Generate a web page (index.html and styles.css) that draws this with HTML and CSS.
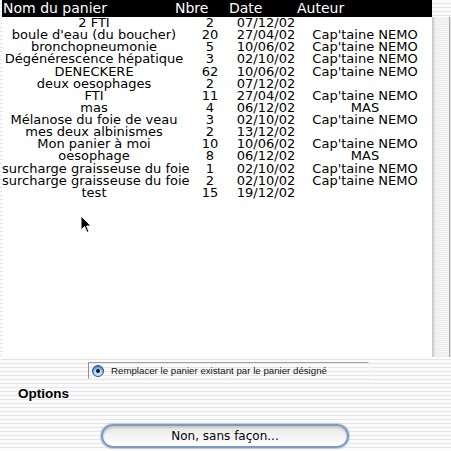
FILE: index.html
```html
<!DOCTYPE html>
<html lang="fr">
<head>
<meta charset="utf-8">
<link rel="stylesheet" href="styles.css">
</head>
<body>
<div class="window">
  <div class="listbox">
    <div class="list">
      <div class="header">
        <span class="h-nom">Nom du panier</span>
        <span class="h-nbre">Nbre</span>
        <span class="h-date">Date</span>
        <span class="h-auteur">Auteur</span>
      </div>
      <div class="rows">
        <div class="row"><span>2 FTI</span><span>2</span><span>07/12/02</span><span></span></div>
        <div class="row"><span>boule d'eau (du boucher)</span><span>20</span><span>27/04/02</span><span>Cap'taine NEMO</span></div>
        <div class="row"><span>bronchopneumonie</span><span>5</span><span>10/06/02</span><span>Cap'taine NEMO</span></div>
        <div class="row"><span>Dégénérescence hépatique</span><span>3</span><span>02/10/02</span><span>Cap'taine NEMO</span></div>
        <div class="row"><span>DENECKERE</span><span>62</span><span>10/06/02</span><span>Cap'taine NEMO</span></div>
        <div class="row"><span>deux oesophages</span><span>2</span><span>07/12/02</span><span></span></div>
        <div class="row"><span>FTI</span><span>11</span><span>27/04/02</span><span>Cap'taine NEMO</span></div>
        <div class="row"><span>mas</span><span>4</span><span>06/12/02</span><span>MAS</span></div>
        <div class="row"><span>Mélanose du foie de veau</span><span>3</span><span>02/10/02</span><span>Cap'taine NEMO</span></div>
        <div class="row"><span>mes deux albinismes</span><span>2</span><span>13/12/02</span><span></span></div>
        <div class="row"><span>Mon panier à moi</span><span>10</span><span>10/06/02</span><span>Cap'taine NEMO</span></div>
        <div class="row"><span>oesophage</span><span>8</span><span>06/12/02</span><span>MAS</span></div>
        <div class="row"><span>surcharge graisseuse du foie</span><span>1</span><span>02/10/02</span><span>Cap'taine NEMO</span></div>
        <div class="row"><span>surcharge graisseuse du foie</span><span>2</span><span>02/10/02</span><span>Cap'taine NEMO</span></div>
        <div class="row"><span>test</span><span>15</span><span>19/12/02</span><span></span></div>
      </div>
    </div>
    <div class="scrollbar"><div class="track"></div></div>
  </div>
  <div class="radio-line">
    <div class="radio-box">
      <span class="radio"><span class="dot"></span></span>
      <span class="radio-label">Remplacer le panier existant par le panier désigné</span>
    </div>
  </div>
  <div class="options">Options</div>
  <div class="button-line">
    <button class="btn">Non, sans façon...</button>
  </div>
  <svg class="cursor" width="12" height="19" viewBox="0 0 12 19">
    <path d="M1 1 L1 15 L4.5 11.5 L7 17.5 L9 16.6 L6.6 11 L11 11 Z" fill="#000" stroke="#fff" stroke-width="1"/>
  </svg>
</div>
</body>
</html>
```
FILE: styles.css
```css
html, body {
  margin: 0;
  padding: 0;
}
body {
  width: 451px;
  height: 451px;
  overflow: hidden;
  font-family: "DejaVu Sans", "Liberation Sans", sans-serif;
  background: repeating-linear-gradient(to bottom, #fbfbfb 0 3px, #e6e6e6 3px 4px);
}
.window {
  position: relative;
  width: 451px;
  height: 451px;
}
.listbox {
  display: flex;
  height: 357px;
  padding-left: 2px;
}
.list {
  width: 430px;
  background: #fff;
}
.header {
  height: 17px;
  background: #000;
  color: #fff;
  font-size: 14px;
  line-height: 17px;
  display: grid;
  grid-template-columns: 172px 54px 68px 1fr;
  padding-left: 1px;
  white-space: nowrap;
}
.rows {
  padding-top: 0;
}
.row {
  display: grid;
  grid-template-columns: 184px 48px 64px 134px;
  height: 12.14px;
  line-height: 12.14px;
  font-size: 13px;
  color: #000;
  white-space: nowrap;
}
.row span {
  text-align: center;
}
.scrollbar {
  width: 19px;
  display: flex;
  flex-direction: column;
  padding-top: 17px;
}
.track {
  flex: 1;
  background:
    linear-gradient(to right, #c9c9c9 0 1px, #dcdcdc 1px 3px, rgba(255,255,255,0) 3px 17px, #a8a8a8 17px 18px, #e0e0e0 18px 19px),
    repeating-linear-gradient(to bottom, #f6f6f6 0 1px, #ececec 1px 2px);
}
.radio-line {
  padding: 5px 0 0 88px;
}
.radio-box {
  display: flex;
  align-items: center;
  width: 276px;
  height: 15px;
  border-top: 1px solid #a0a0a0;
  border-left: 1px solid #909090;
  border-right: 1px solid #f4f4f4;
  border-bottom: 1px solid #f4f4f4;
  padding-left: 3px;
  gap: 7px;
}
.radio {
  width: 12px;
  height: 12px;
  border-radius: 50%;
  box-sizing: border-box;
  border: 1px solid #2a4e8a;
  background: radial-gradient(circle at 50% 70%, #bfe4ff 0 35%, #4e8fd8 70%, #2c62b8 100%);
  display: flex;
  align-items: center;
  justify-content: center;
}
.dot {
  width: 4px;
  height: 4px;
  border-radius: 50%;
  background: #111;
}
.radio-label {
  font-family: "Liberation Sans", sans-serif;
  font-size: 9.7px;
  color: #111;
}
.options {
  padding: 7px 0 0 18px;
  font-family: "Liberation Sans", sans-serif;
  font-size: 13.5px;
  font-weight: bold;
  line-height: 16px;
  color: #000;
}
.button-line {
  padding: 22px 0 0 101px;
}
.btn {
  width: 248px;
  height: 24px;
  border-radius: 12px;
  border: 2px solid #7d9bc2;
  box-shadow: 0 0 1px 1px #b8cbe2, inset 0 2px 2px #c8c8c8;
  background: linear-gradient(to bottom, #e6e6e6, #f4f4f4 50%, #ffffff);
  font-family: "DejaVu Sans", sans-serif;
  font-size: 12px;
  color: #000;
  padding: 0;
  line-height: 20px;
}
.cursor {
  position: absolute;
  left: 80px;
  top: 215px;
}
```
